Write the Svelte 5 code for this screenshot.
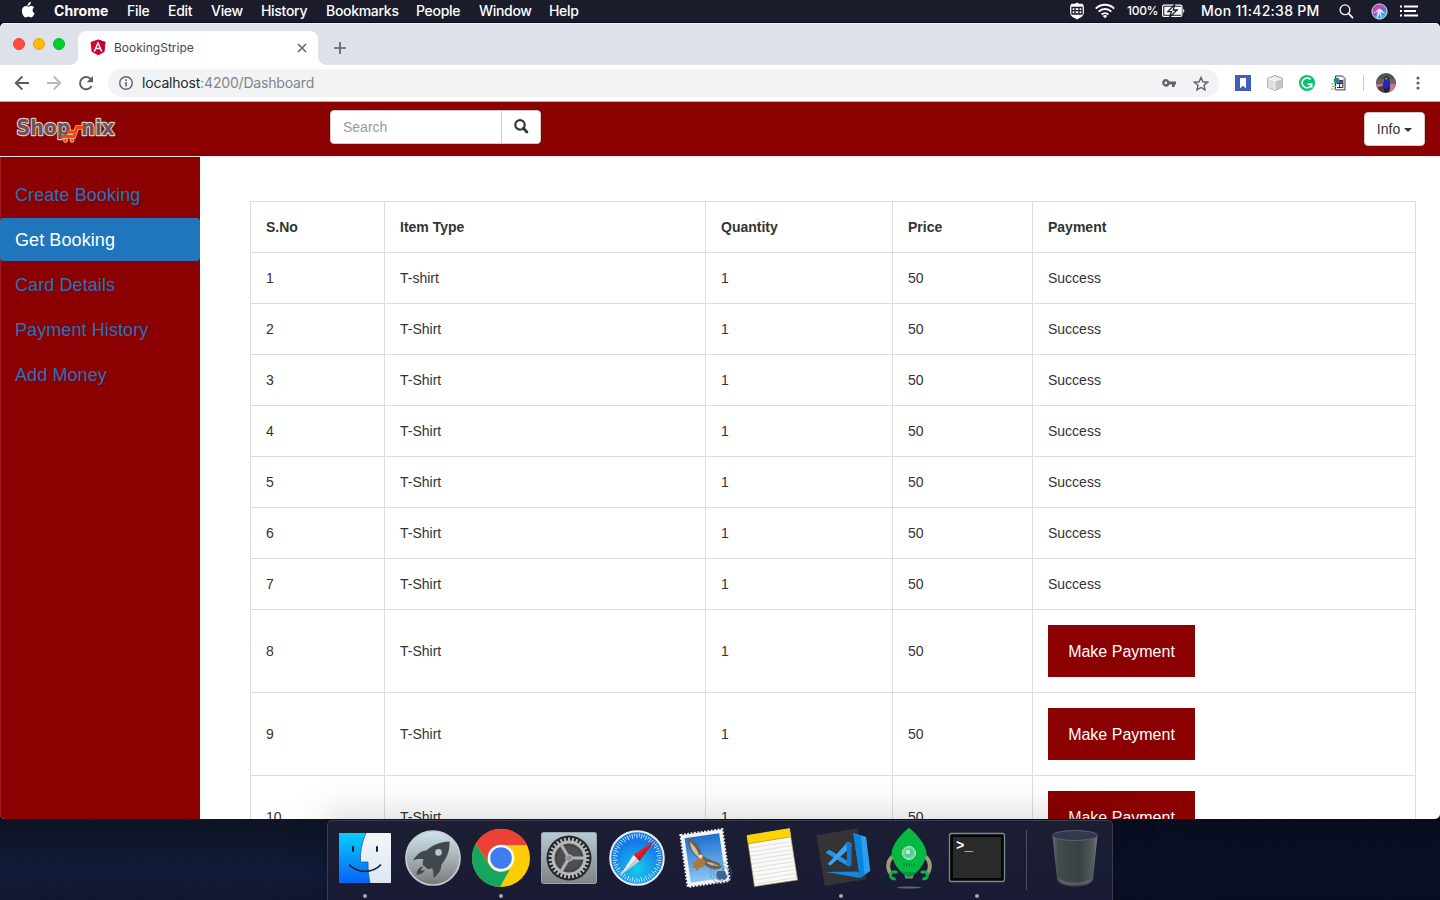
<script>
  const menus = [
    { label: 'File', width: 41 },
    { label: 'Edit', width: 43 },
    { label: 'View', width: 50 },
    { label: 'History', width: 65 },
    { label: 'Bookmarks', width: 90 },
    { label: 'People', width: 63 },
    { label: 'Window', width: 70 },
    { label: 'Help', width: 40 }
  ];
  const links = ['Create Booking', 'Get Booking', 'Card Details', 'Payment History', 'Add Money'];
  const active = 'Get Booking';
  const bookings = Array.from({ length: 10 }, (_, i) => ({
    no: i + 1,
    item: i === 0 ? 'T-shirt' : 'T-Shirt',
    quantity: 1,
    price: 50,
    paid: i < 7
  }));
  const teeth = Array.from({ length: 30 }, (_, i) => i * 12);
  const ticks = Array.from({ length: 60 }, (_, i) => i * 6);
  const noteLines = Array.from({ length: 10 }, (_, i) => 27 + i * 4);
</script>

<div class="screen">
  <header class="menubar">
    <svg class="apple" width="16" height="18" viewBox="0 0 16 18"><path fill="#fff" d="M10.900 1c.1 1.100-.3 2-1 2.800-.6.7-1.500 1.200-2.400 1.100-.1-1 .4-2 1-2.700C9.100 1.500 10.100 1 10.900 1zM14.200 6.600c-1 .6-1.600 1.500-1.600 2.700 0 1.400.8 2.500 2 3-.3.8-.6 1.500-1.100 2.200-.7 1-1.400 1.900-2.500 1.900-1 0-1.400-.6-2.600-.6s-1.600.6-2.600.6c-1.100 0-1.900-1-2.600-2C1.800 12.300 1.300 9 2.600 7c.8-1.300 2-2 3.200-2 1.100 0 1.900.7 2.800.7.9 0 1.500-.7 2.900-.7 1 0 2.100.6 2.700 1.600z"/></svg>
    <strong class="app-name">Chrome</strong>
    <nav class="menus">
      {#each menus as m}<span style="width:{m.width}px">{m.label}</span>{/each}
    </nav>
    <div class="status">
      <svg class="shield" width="16" height="18" viewBox="0 0 16 18"><path fill="#fff" d="M8 .5l2 1.300h3.500l1 1.200.5 3-.2 5c-.2 2.500-1.800 4-4.300 5L8 17.500 5.500 16C3 15 1.400 13.500 1.200 11L1 6l.5-3 1-1.200H6z"/><path stroke="#1a1c2b" stroke-width="1.300" fill="none" d="M3 5.500h10v6.500H3zM3 8.700h10M6 5.500v6.500M10 5.500v6.500"/></svg>
      <svg class="wifi" width="20" height="16" viewBox="0 0 20 16"><g fill="none" stroke="#fff" stroke-width="1.900"><path d="M.8 5.600a13 13 0 0 1 18.400 0M3.700 8.600a9 9 0 0 1 12.600 0M6.600 11.500a5 5 0 0 1 6.800 0"/></g><path fill="#fff" d="M10 15.300l-2.200-2.200a3.200 3.200 0 0 1 4.400 0z"/></svg>
      <span class="percent">100%</span>
      <svg class="battery" width="23" height="14" viewBox="0 0 23 14"><rect x=".6" y="1.100" width="19.300" height="11.300" rx="1.500" fill="none" stroke="#fff" stroke-width="1.200"/><path fill="#fff" d="M2.300 2.800h17v8h-17zM21.200 4.800c1.500.5 1.500 3.600 0 4.100z"/><path fill="#fff" stroke="#1a1c2b" stroke-width="1.300" d="M12.800.5L5.800 7.600h3.700l-2 5.700 7.700-7.300h-4z"/></svg>
      <span class="clock">Mon 11:42:38 PM</span>
      <svg class="find" width="15" height="16" viewBox="0 0 15 16"><circle cx="6" cy="6.800" r="4.900" fill="none" stroke="#fff" stroke-width="1.300"/><path d="M9.600 10.500l4.400 4.600" stroke="#fff" stroke-width="1.700"/></svg>
      <svg class="siri" width="17" height="17" viewBox="0 0 17 17">
        <defs><linearGradient id="siri" x1="0" y1="0" x2="0.600" y2="1"><stop offset="0" stop-color="#2a63c8"/><stop offset=".35" stop-color="#e03fa8"/><stop offset=".62" stop-color="#5b6bf0"/><stop offset="1" stop-color="#28d3d0"/></linearGradient></defs>
        <circle cx="8.500" cy="8.500" r="7.600" fill="url(#siri)" stroke="#dfe0ee" stroke-width="1"/><path d="M2 9.500c3 0 4-3 6.500-4 2.500 1 4 4 6 5-3-.5-4-1-5-2 1 3 .5 5 2 6.500-2-1-2.500-3-3-5-1 3-1.500 4.500-3 5.500C5.500 13 6.500 10 7 8c-1.500 1.500-3 2-5 1.500z" fill="#fff" opacity=".85"/>
      </svg>
      <svg class="list" width="18" height="12" viewBox="0 0 18 12"><path stroke="#fff" stroke-width="2" d="M0 1.500h2M4 1.500h14M0 6h2M4 6h12M0 10.500h2M4 10.500h14"/></svg>
    </div>
  </header>

  <main class="window">
    <div class="tabstrip">
      <div class="lights"><i class="close"></i><i class="min"></i><i class="max"></i></div>
      <div class="tab">
        <svg width="16" height="17" viewBox="0 0 16 17"><path fill="#dd0031" d="M8 .5l7.400 2.600-1.100 9.700L8 16.300l-6.300-3.500L.6 3.100z"/><path fill="#c3002f" d="M8 .5l7.400 2.600-1.100 9.700L8 16.300z"/><path fill="#fff" fill-rule="evenodd" d="M8 2.300l4.500 10.200h-1.700l-.9-2.300H6.100l-.9 2.300H3.500zM8 5.500L6.700 8.800h2.600z"/></svg>
        <span>BookingStripe</span>
        <svg class="x" width="10" height="10" viewBox="0 0 10 10"><path d="M1 1l8 8M9 1L1 9" stroke="#5f6368" stroke-width="1.500"/></svg>
      </div>
      <svg class="plus" width="12" height="12" viewBox="0 0 12 12"><path d="M6 0v12M0 6h12" stroke="#5f6368" stroke-width="1.700"/></svg>
    </div>

    <div class="toolbar">
      <svg width="16" height="16" viewBox="0 0 16 16"><path d="M15 8H2M8.300 1.500L1.800 8l6.500 6.500" fill="none" stroke="#5a5d63" stroke-width="1.900"/></svg>
      <svg width="16" height="16" viewBox="0 0 16 16"><path d="M1 8h13M7.700 1.500L14.200 8l-6.500 6.500" fill="none" stroke="#b9bbbe" stroke-width="1.900"/></svg>
      <svg width="16" height="16" viewBox="0 0 16 16"><path d="M13.500 11A6.100 6.100 0 1 1 12.400 3.800L14 5.500" fill="none" stroke="#5a5d63" stroke-width="1.900"/><path d="M15 1v6.300H8.700z" fill="#5a5d63"/></svg>
      <div class="omnibox">
        <svg width="16" height="16" viewBox="0 0 16 16"><circle cx="8" cy="8" r="6.300" fill="none" stroke="#5f6368" stroke-width="1.400"/><path d="M8 7v4.500M8 4.300v1.600" stroke="#5f6368" stroke-width="1.600"/></svg>
        <span class="url">localhost<em>:4200/Dashboard</em></span>
        <svg class="key" width="14" height="8" viewBox="0 0 14 8"><path fill="#5f6368" fill-rule="evenodd" d="M3.800 0a3.800 3.800 0 0 1 3.600 2.600H14v2.800h-1.300V8H10V5.400H7.400A3.800 3.800 0 1 1 3.800 0zm0 2.500a1.400 1.400 0 1 0 0 2.800 1.400 1.400 0 0 0 0-2.800z"/></svg>
        <svg class="star" width="16" height="15" viewBox="0 0 16 15"><path d="M8 1.500l1.900 4.300 4.700.4-3.600 3.100 1.100 4.600L8 11.500l-4.100 2.400L5 9.300 1.400 6.200l4.700-.4z" fill="none" stroke="#5f6368" stroke-width="1.400"/></svg>
      </div>
      <div class="extensions">
        <svg width="16" height="16" viewBox="0 0 16 16"><path fill="#3f5fb9" d="M0 0h16v16H0z"/><path fill="#fff" d="M5 3h6v10.200l-3-2.400-3 2.400z"/></svg>
        <svg width="16" height="16" viewBox="0 0 16 16"><path fill="#f0f0f0" stroke="#9a9a9a" stroke-width=".9" d="M8 .5l7.300 2.800v9L8 15.500.7 12.300v-9z"/><path fill="#c4c4c4" d="M8 6.200l7-2.700v8.700l-7 3z"/><path fill="#dedede" d="M8 6.200L1 3.500v8.700l7 3z"/><path d="M1 3.500l7 2.700 7-2.700M8 6.200v9" fill="none" stroke="#fafafa" stroke-width=".8"/></svg>
        <svg width="16" height="16" viewBox="0 0 16 16"><circle cx="8" cy="8" r="8" fill="#07c26e"/><path d="M11.600 4.500A4.900 4.900 0 1 0 12.700 9.200M8.500 9h4.200v3.500" fill="none" stroke="#fff" stroke-width="1.600"/></svg>
        <svg width="16" height="16" viewBox="0 0 16 16"><path fill="#fff" stroke="#26395e" stroke-width="1" d="M4.500 1h7L14 3.500v11.400H4.500z"/><path fill="#9eb6df" d="M11.500 1.500v2.500H13v10.500h-.5v-8z"/><circle cx="5.500" cy="5.500" r="2.800" fill="#16a13b"/><path fill="#3173d4" d="M5.500 2.700a2.800 2.800 0 0 1 1 5.500L5 6z"/><path fill="#c63b3b" d="M9 6h2.500v2.500H9z"/><path fill="none" stroke="#24304b" d="M5.500 8.500h6.300M8.700 5.500v7M6 12.500h5.800v-7h-3"/><path d="M0 9h4M1 11.500h4M0 14h5" stroke="#8fae78" stroke-width="1"/></svg>
      </div>
      <svg class="avatar" width="20" height="20" viewBox="0 0 20 20"><defs><clipPath id="face"><circle cx="10" cy="10" r="10"/></clipPath></defs><g clip-path="url(#face)"><path fill="#49594b" d="M0 0h20v20H0z"/><path fill="#715f63" d="M0 6h20v5H0z"/><path fill="#c07c80" d="M0 11h20v9H0z"/><path fill="#573e3d" d="M0 15l8-3 3 8H1z"/><path fill="#211e32" d="M8.500 4l1.500-1 2.500 1 1 4 .5 7-1 4H8l-.5-4 .5-6z"/><path fill="#2424c0" d="M8.500 7h3.500l1.500 3-1 5.500H8L7 11z"/><circle cx="10.300" cy="5.600" r="1.400" fill="#ad725d"/></g></svg>
      <svg class="dots" width="4" height="14" viewBox="0 0 4 14"><g fill="#5f6368"><circle cx="2" cy="2" r="1.600"/><circle cx="2" cy="7" r="1.600"/><circle cx="2" cy="12" r="1.600"/></g></svg>
    </div>

    <div class="navbar">
      <svg class="brand" width="102" height="30" viewBox="0 0 102 30">
        <g class="outline" aria-hidden="true"><path d="M67 13.500h-5l-3 9H46M59 18h-8" fill="none" stroke="#e3b5a6" stroke-width="4.400"/></g>
        <g class="wordmark">
          <text x="1.500" y="21" textLength="54" lengthAdjust="spacingAndGlyphs">Shop</text>
          <text x="66" y="21" textLength="33.500" lengthAdjust="spacingAndGlyphs">nix</text>
        </g>
        <g fill="none" stroke="#ff4300" stroke-width="2.800"><path d="M68 13.500h-6l-3 9H46M60 18h-8"/></g>
        <g fill="#ff4300" stroke="#efc3b3"><circle cx="50.500" cy="26.300" r="2"/><circle cx="57" cy="26.300" r="2"/></g>
      </svg>
      <div class="search">
        <input placeholder="Search" aria-label="Search" />
        <button aria-label="Submit search"><svg width="15" height="15" viewBox="0 0 15 15"><circle cx="6" cy="5.900" r="4.700" fill="none" stroke="#333" stroke-width="2.200"/><path d="M9.300 9.300l3.600 3.600" stroke="#333" stroke-width="2.800" stroke-linecap="round"/></svg></button>
      </div>
      <button class="info">Info <i></i></button>
    </div>

    <div class="page">
      <aside class="sidebar">
        {#each links as l}<a href="#top" class:active={l === active}>{l}</a>{/each}
      </aside>
      <section class="content">
        <table>
          <colgroup><col class="c1" /><col class="c2" /><col class="c3" /><col class="c4" /><col class="c5" /></colgroup>
          <thead><tr><th>S.No</th><th>Item Type</th><th>Quantity</th><th>Price</th><th>Payment</th></tr></thead>
          <tbody>
            {#each bookings as b}
              <tr>
                <td>{b.no}</td><td>{b.item}</td><td>{b.quantity}</td><td>{b.price}</td>
                <td>{#if b.paid}Success{:else}<button class="pay">Make Payment</button>{/if}</td>
              </tr>
            {/each}
          </tbody>
        </table>
      </section>
    </div>
  </main>

  <footer class="desktop">
    <div class="dock">
      <div class="slot running">
        <svg width="68" height="80" viewBox="0 0 68 80"><defs><linearGradient id="fb" x2="0" y2="1"><stop stop-color="#04cffd"/><stop offset="1" stop-color="#0a62f6"/></linearGradient><linearGradient id="fw" x2="0" y2="1"><stop stop-color="#f5f6f9"/><stop offset="1" stop-color="#dce6f2"/></linearGradient></defs>
          <rect x="8" y="12" width="52" height="50" rx="1" fill="url(#fw)"/><path fill="url(#fb)" d="M9 12h26c-4 9-6 19-5.500 29H37c0 7 .5 14 2 21H9a1 1 0 0 1-1-1V13a1 1 0 0 1 1-1z"/><path d="M35 12c-4 9-6 19-5.500 29H37c0 7 .5 14 2 21" fill="none" stroke="#174f80" stroke-width=".7"/><path d="M22 26v4M46 26v4" stroke="#12202d" stroke-width="2" stroke-linecap="round"/><path d="M18.500 44c8 8.500 23 8.500 31 0" fill="none" stroke="#12202d" stroke-width="1.700" stroke-linecap="round"/></svg>
      </div>
      <div class="slot">
        <svg width="68" height="80" viewBox="0 0 68 80"><defs><linearGradient id="lp" x2="0" y2="1"><stop stop-color="#cee5ee"/><stop offset=".6" stop-color="#a0a7aa"/><stop offset="1" stop-color="#777676"/></linearGradient></defs>
          <circle cx="34" cy="37" r="27" fill="url(#lp)" stroke="#c9cdd0" stroke-width="1.700"/><path fill="#41484c" d="M50.500 20.500c-9 .5-17 3-23 9-5 0-10 4-13.500 10 4-1.300 7-1.800 10.500-1-1 2.500-1 4-.5 5.500l4.500 4c1.500.3 3 0 4.500-1 1.500 3 1.700 6 1.300 10 5-3.500 8-8 8.200-13.500 5.500-6.500 8.500-14 8-23z"/><path fill="#41484c" d="M24.500 45.500c-4.500.5-6.500 3.500-7 8 4 0 7-1 8.500-5-1.500 1-3 1.500-4 1 .3-1.500 1-2.800 2.500-4z"/><circle cx="39.500" cy="31.400" r="3.300" fill="#b8c7cd"/></svg>
      </div>
      <div class="slot running">
        <svg width="68" height="80" viewBox="0 0 68 80"><circle cx="34" cy="37" r="29" fill="#fccd05"/><path fill="#16a65f" d="M8.900 22.500l13.300 21.200A14 14 0 0 0 43 48L33 66A29 29 0 0 1 8.900 22.500z"/><path fill="#ed4135" d="M8.900 22.500A29 29 0 0 1 60.200 24H34L20.500 40.500z"/><circle cx="34" cy="37" r="13.300" fill="#fff"/><circle cx="34" cy="37" r="10.800" fill="#3f7bf1"/></svg>
      </div>
      <div class="slot">
        <svg width="68" height="80" viewBox="0 0 68 80"><defs><linearGradient id="sp" x2="0" y2="1"><stop stop-color="#b6cad4"/><stop offset="1" stop-color="#818383"/></linearGradient></defs>
          <rect x="6.500" y="11.500" width="55" height="51" rx="2" fill="url(#sp)" stroke="#98a6ae"/><circle cx="34" cy="37" r="22.500" fill="#25272a"/>
          {#each teeth as t}<path d="M34 16.500v5" stroke="#b6b9bb" stroke-width="2" transform="rotate({t} 34 37)"/>{/each}
          <circle cx="34" cy="37" r="16" fill="#4c4e50" stroke="#b7b9bb" stroke-width="3"/><circle cx="34" cy="37" r="13" fill="none" stroke="#3b3d40"/><path d="M34 37h15M34 37l-8-13.500M34 37l-8 13.500" stroke="#b0b2b4" stroke-width="3.200"/><circle cx="34" cy="37" r="3.300" fill="#8c8f91" stroke="#b9bbbd"/></svg>
      </div>
      <div class="slot">
        <svg width="68" height="80" viewBox="0 0 68 80"><defs><radialGradient id="sf" cy=".7"><stop stop-color="#15cbec"/><stop offset="1" stop-color="#157ae8"/></radialGradient></defs>
          <circle cx="34" cy="37" r="26.800" fill="url(#sf)" stroke="#e9edef" stroke-width="2"/>
          {#each ticks as t, i}<path d="M34 12.500v{i % 2 ? 3 : 5}" stroke="#d9f2fc" stroke-width=".8" transform="rotate({t} 34 37)"/>{/each}
          <path fill="#f01d22" d="M51.500 19.500L30.500 34l6 6z"/><path fill="#f1f1f1" d="M30.500 34L17 54.500 36.500 40z"/><path fill="#c9ccd0" d="M33.500 37L17 54.500 36.500 40z"/><path fill="#c91920" d="M51.500 19.500L33.500 37l3 3z"/></svg>
      </div>
      <div class="slot">
        <svg width="68" height="80" viewBox="0 0 68 80"><defs><linearGradient id="ml" x2="0" y2="1"><stop stop-color="#1c70d0"/><stop offset="1" stop-color="#8ac8f4"/></linearGradient></defs>
          <g transform="rotate(-8 34 37)"><path fill="#f4f4f4" d="M13 11h42v52H13z"/><path d="M13 11h42v52H13z" fill="none" stroke="#f4f4f4" stroke-width="2.400" stroke-dasharray="1.800 1.600"/><path fill="url(#ml)" d="M16.500 14.500h35v45h-35z"/></g>
          <path fill="#6d5f52" d="M17.500 17.500c5 1 9 4.500 11 9 1.500 3 2 5.500 2.500 8 5 3.500 11 5 17 7.500l3 4c-3 2.500-6 3-9 2-3-.5-6-2-8-4-2-3-5-6-8-8-4-2.500-6.500-6.500-8-10.500-.8-3-1-5.500-.5-8z"/><path fill="#c9c0b2" d="M19 20.500c2 3 6 5 8.500 12l.5 4c-5-3.500-8.500-8.500-9-16zM35 41c5 0 9 2 13 4-5 0-9-.5-13-4z"/><path fill="#a9793f" d="M26 37.500c4-2 7 0 8.500 3l-1.500 5-4.500 1.500-2.500 3-1.500-3-4-.5 2.500-2-3-2.500 4-1z"/><circle cx="29.500" cy="35.500" r="2" fill="#eadfd0"/><g fill="none" stroke="#597b99" opacity=".55"><circle cx="50" cy="52" r="10.500"/><circle cx="50" cy="52" r="7.500"/></g><path fill="#3c6694" d="M53 46l-2 3c2 0 3-1 2-3zm-6 4c-3 2-2 8 2 9l2-1 2 1c3-1 4-4 2-6 0-3-2-4-4-3z"/></svg>
      </div>
      <div class="slot">
        <svg width="68" height="80" viewBox="0 0 68 80"><path d="M8 14.500l42.500-7L58.500 59l-43 6.500z" fill="#fafaf7" stroke="#b5a55e" stroke-width=".7"/><path d="M8 14.500l42.500-7 1.300 8.300-42.500 7z" fill="#ffd400"/><path d="M9.300 22.800l42.500-7" stroke="#a78c23" stroke-width=".7"/>{#each noteLines as y, i}<path d="M{10.500 + i * .62} {y}l42-6.500" stroke="#d8d9d9" stroke-width=".8"/>{/each}</svg>
      </div>
      <div class="slot running">
        <svg width="68" height="80" viewBox="0 0 68 80"><path fill="#343435" d="M9.500 14.300l41-7 9 51L17.700 65z"/><path fill="#1687dc" d="M18.700 51l32.600-.5L53 57z"/><path fill="#2ba0f2" d="M46.300 12.300l12.700 3.500L63.300 50 53 57z"/><path fill="#0c83dc" d="M46.300 12.300l7.500 2L57.500 54 53 57z"/><path fill="#2495e6" d="M20 30l2.500-1.200L43 41.500l1 3-2.500 1L19 32z"/><path fill="#38a4f2" d="M20.700 43l20-22.200 3.800 1.400v3.300L23.500 44.500z"/><path fill="#1479c8" d="M39.500 21l5 1.200V44l-3 1.800-3-4.300h1.500z"/></svg>
      </div>
      <div class="slot">
        <svg width="68" height="80" viewBox="0 0 68 80"><g fill="none" stroke="#a09a76" stroke-width="4"><path d="M18.500 35c-6 4-7 12-2.500 18M49.500 35c6 4 7 12 2.500 18"/></g><path fill="#958d64" d="M29 53h10l-1.500 4.500h-7z"/><path fill="#05b943" d="M34 6.700C41 12 51.500 24 51.500 32.500 50 43 43 52 34 56.500 25 52 18 43 16.500 32.500 16.500 24 27 12 34 6.700z"/><path fill="#079941" d="M24.500 49.500c6 2 13 2 19 0-3 3-6 5.500-9.500 7-3.500-1.500-6.500-4-9.500-7z"/><circle cx="34" cy="32" r="6.500" fill="#6fd9a0" stroke="#b6f0cd"/><circle cx="34" cy="32" r="4.300" fill="#58c795"/><circle cx="33" cy="31" r="2.300" fill="#b1f5cb"/><path d="M29 42.500v2M31.500 42.500v3M34 42.500v3M36.500 42.500v3M39 42.500v2" stroke="#087b35"/><g fill="none" stroke="#08b448" stroke-width="3"><path d="M22 52c-2-2.500-6.500-1-6.500 2s2.500 4.500 5 3.500M46 52c2-2.500 6.500-1 6.500 2s-2.500 4.500-5 3.500"/></g><ellipse cx="34" cy="66.500" rx="12" ry="1" fill="#8a8b98" opacity=".65"/></svg>
      </div>
      <div class="slot running">
        <svg width="68" height="80" viewBox="0 0 68 80"><rect x="6.500" y="12.500" width="55" height="48" rx="2" fill="#050505" stroke="#7a8a91" stroke-width="1.300"/><path fill="#292a2a" d="M10 16h48v41H10z"/><text x="13" y="28.500" class="prompt">&gt;_</text></svg>
      </div>
      <i class="divider"></i>
      <div class="slot">
        <svg width="68" height="80" viewBox="0 0 68 80"><defs><linearGradient id="tr"><stop stop-color="#6a6e74"/><stop offset=".12" stop-color="#454c4e"/><stop offset=".6" stop-color="#394042"/><stop offset=".9" stop-color="#535b5e"/><stop offset="1" stop-color="#777c80"/></linearGradient></defs>
          <path fill="url(#tr)" d="M11.500 15h45L52 58c-1 10-35 10-36 0z"/><ellipse cx="34" cy="14.500" rx="22.500" ry="5" fill="#34384a" stroke="#5c606c"/><path fill="#83888b" opacity=".4" d="M17 57c8 6 26 6 34 0-2 9-32 10-34 0z"/></svg>
      </div>
    </div>
  </footer>
</div>

<style>
  :global(body) { margin: 0; overflow: hidden; }
  * { box-sizing: border-box; }
  svg { display: block; flex: none; }
  button { font: inherit; }
  .screen { width: 1440px; height: 900px; display: flex; flex-direction: column; overflow: hidden; background: #070b1e; font-family: "Liberation Sans", Arial, sans-serif; font-size: 14px; color: #333; }

  .menubar { height: 23px; flex: none; display: flex; align-items: center; padding-left: 20px; background: #1a1c2c; border-bottom: 1px solid #080b1c; color: #fff; font: 500 14px/22px Inter, sans-serif; }
  .apple { margin-right: 18px; margin-bottom: 2px; }
  .app-name { width: 73px; font-weight: 700; letter-spacing: .05px; }
  .menus { display: flex; letter-spacing: -.3px; }
  .menus span { flex: none; }
  .status { display: flex; align-items: center; margin-left: auto; padding-right: 22px; }
  .wifi { margin-left: 10px; margin-bottom: 1px; }
  .percent { width: 35px; margin-left: 12px; font-size: 12px; letter-spacing: -.3px; }
  .clock { width: 119px; margin: 0 19px 0 16px; white-space: nowrap; letter-spacing: .28px; }
  .siri { margin-left: 17px; }
  .list { margin-left: 12px; }

  .window { height: 796px; flex: none; display: flex; flex-direction: column; background: #fff; border-radius: 5px; overflow: hidden; }
  .tabstrip { height: 42px; flex: none; display: flex; align-items: flex-end; background: #dee1e9; box-shadow: inset 0 1px #eceef3; }
  .lights { display: flex; gap: 8px; padding: 0 13px 15px 13px; }
  .lights i { width: 12px; height: 12px; border-radius: 50%; }
  .close { background: #ff4b42; border: 1px solid #e5423a; }
  .min { background: #ffbd00; border: 1px solid #e6a800; }
  .max { background: #00d02b; border: 1px solid #06b72a; }
  .tab { position: relative; width: 240px; height: 34px; display: flex; align-items: center; padding: 0 11px 1px 12px; border-radius: 8px 8px 0 0; background: #fff; color: #45494d; font: 12px Inter, sans-serif; }
  .tab::before, .tab::after { content: ""; position: absolute; bottom: 0; width: 8px; height: 8px; }
  .tab::before { left: -8px; background: radial-gradient(circle at 0 0, transparent 7.500px, #fff 8px); }
  .tab::after { right: -8px; background: radial-gradient(circle at 100% 0, transparent 7.500px, #fff 8px); }
  .tab span { margin: 0 0 1px 8px; }
  .x { margin-left: auto; }
  .plus { margin: 0 0 11px 16px; }

  .toolbar { height: 37px; flex: none; display: flex; align-items: center; padding-left: 14px; gap: 16px; border-bottom: 1px solid #b4b0b0; }
  .omnibox { width: 1111px; height: 28px; margin-left: -2px; padding: 0 10px; display: flex; align-items: center; border-radius: 14px; background: #f1f3f4; }
  .url { margin: 0 0 1px 8px; color: #24272a; font: 14px Inter, sans-serif; letter-spacing: -.18px; }
  .url em { font-style: normal; color: #80868b; }
  .key { margin-left: auto; }
  .star { margin-left: 17px; }
  .extensions { display: flex; gap: 16px; padding-right: 16px; border-right: 1px solid #c9cbce; }
  .avatar { margin-left: -4px; }
  .dots { margin-left: 4px; }

  .navbar { height: 55px; flex: none; display: flex; align-items: flex-start; padding: 8px 15px 0; background: #8b0000; border-bottom: 1px solid #e7e7e7; }
  .brand { margin-top: 4px; }
  .wordmark { font: bold 21px "DejaVu Sans", sans-serif; fill: #6d5557; stroke: #dccaca; stroke-width: 2.400px; paint-order: stroke; stroke-linejoin: round; }
  .search { display: flex; width: 211px; height: 34px; margin-left: 213px; border: 1px solid #ccc; border-radius: 4px; overflow: hidden; background: #fff; }
  .search input { width: 170px; padding: 0 12px; border: 0; font: 14px "Liberation Sans", sans-serif; outline: 0; }
  .search input::placeholder { color: #999; }
  .search button { flex: 1; display: flex; align-items: center; justify-content: center; padding: 0 0 2px; border: 0; border-left: 1px solid #ccc; background: #fff; }
  .info { width: 61px; height: 34px; margin: 2px 0 0 auto; display: flex; align-items: center; justify-content: center; gap: 4px; padding: 0; border: 1px solid #ccc; border-radius: 4px; background: #fff; color: #333; }
  .info i { margin-top: 1px; border: 4px solid transparent; border-top-color: #333; border-bottom: 0; }

  .page { flex: 1; min-height: 0; display: flex; }
  .sidebar { width: 200px; flex: none; display: flex; flex-direction: column; gap: 2px; padding-top: 16px; background: #8b0000; box-shadow: inset 1px 0 #9c1d20; }
  .sidebar a { height: 43px; padding-left: 15px; border-radius: 4px; color: #1f74ba; font-size: 18px; line-height: 45px; letter-spacing: .09px; text-decoration: none; }
  .sidebar a.active { background: #1f76bd; color: #fff; }
  .content { padding: 44px 24px 0 50px; overflow: hidden; }
  table { width: 1166px; table-layout: fixed; border-collapse: separate; border-spacing: 0; border-top: 1px solid #ddd; border-left: 1px solid #ddd; }
  .c1 { width: 134px; } .c2 { width: 321px; } .c3 { width: 187px; } .c4 { width: 140px; } .c5 { width: 383px; }
  th, td { padding: 15px; border-right: 1px solid #ddd; border-bottom: 1px solid #ddd; line-height: 20px; text-align: left; vertical-align: middle; }
  .pay { display: block; width: 147px; height: 52px; padding: 2px 0 0; border: 0; background: #8b0000; color: #fff; font-size: 16px; }

  .desktop { flex: 1; display: flex; justify-content: center; padding-top: 1px; background: linear-gradient(90deg, transparent 35%, rgba(4, 7, 26, .6) 85%), repeating-linear-gradient(45deg, rgba(50, 75, 120, .05) 0 1px, transparent 1px 4px), linear-gradient(#0d1323, #111a38 65%, #11152f); }
  .dock { position: relative; width: 786px; height: 81px; margin-right: 1px; display: flex; padding-left: 3px; border: 1px solid #3a3d50; border-bottom: 0; border-radius: 5px 5px 0 0; background: linear-gradient(#1c1e33, #191b36); box-shadow: 0 0 40px 4px rgba(0, 0, 0, .17); }
  .slot { position: relative; width: 68px; height: 80px; flex: none; }
  .running::after { content: ""; position: absolute; left: 32px; top: 73px; width: 4px; height: 4px; border-radius: 50%; background: #a5a6b8; }
  .divider { width: 1px; height: 60px; margin: 9px 14px 0 15px; background: #4b4d64; }
  .prompt { font: bold 14px "Liberation Mono", monospace; fill: #fff; }
</style>
